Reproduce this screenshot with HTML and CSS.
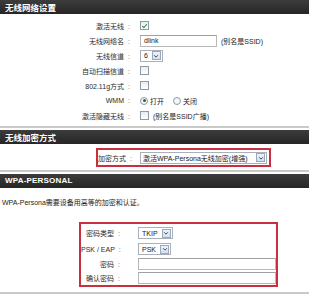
FILE: index.html
```html
<!DOCTYPE html>
<html lang="zh">
<head>
<meta charset="utf-8">
<link rel="stylesheet" href="styles.css">
</head>
<body>
<div class="page">
  <div class="hdr">无线网络设置</div>
  <div class="form f1">
    <span class="lbl">激活无线<i>:</i></span>
    <span class="ctl"><span class="cb on"><svg viewBox="0 0 8 8" width="8" height="8"><path d="M1.5 4.2 L3.3 6 L6.6 2" fill="none" stroke="#2c8a2c" stroke-width="1.3"/></svg></span></span>

    <span class="lbl">无线网络名<i>:</i></span>
    <span class="ctl"><span class="inp ssid">dlink</span><span class="note">(别名是SSID)</span></span>

    <span class="lbl">无线信道<i>:</i></span>
    <span class="ctl"><span class="sel">6<span class="arr"><svg viewBox="0 0 8 8" width="6" height="6"><path d="M1.5 3 L4 5.5 L6.5 3" fill="none" stroke="#3a4a66" stroke-width="1.3"/></svg></span></span></span>

    <span class="lbl">自动扫描信道<i>:</i></span>
    <span class="ctl"><span class="cb"></span></span>

    <span class="lbl">802.11g方式<i>:</i></span>
    <span class="ctl"><span class="cb"></span></span>

    <span class="lbl">WMM<i>:</i></span>
    <span class="ctl"><span class="rd on"></span><span class="rtxt">打开</span><span class="rd"></span><span class="rtxt">关闭</span></span>

    <span class="lbl">激活隐藏无线<i>:</i></span>
    <span class="ctl"><span class="cb"></span><span class="note">(别名是SSID广播)</span></span>
  </div>

  <div class="sep s1"></div>
  <div class="hdr">无线加密方式</div>
  <div class="redbox rb1">
    <span class="lbl">加密方式<i>:</i></span>
    <span class="ctl"><span class="sel wide">激活WPA-Persona无线加密(增强)<span class="arr"><svg viewBox="0 0 8 8" width="6" height="6"><path d="M1.5 3 L4 5.5 L6.5 3" fill="none" stroke="#3a4a66" stroke-width="1.3"/></svg></span></span></span>
  </div>

  <div class="sep s2"></div>
  <div class="hdr latin">WPA-PERSONAL</div>
  <p class="desc">WPA-Persona需要设备用高等的加密和认证。</p>
  <div class="redbox rb2">
    <span class="lbl">密码类型<i>:</i></span>
    <span class="ctl"><span class="sel">TKIP<span class="arr"><svg viewBox="0 0 8 8" width="6" height="6"><path d="M1.5 3 L4 5.5 L6.5 3" fill="none" stroke="#3a4a66" stroke-width="1.3"/></svg></span></span></span>

    <span class="lbl">PSK / EAP<i>:</i></span>
    <span class="ctl"><span class="sel">PSK<span class="arr"><svg viewBox="0 0 8 8" width="6" height="6"><path d="M1.5 3 L4 5.5 L6.5 3" fill="none" stroke="#3a4a66" stroke-width="1.3"/></svg></span></span></span>

    <span class="lbl">密码<i>:</i></span>
    <span class="ctl"><span class="inp pw"></span></span>

    <span class="lbl">确认密码<i>:</i></span>
    <span class="ctl"><span class="inp pw"></span></span>
  </div>
  <div class="sep s3"></div>
</div>
</body>
</html>
```
FILE: styles.css
```css
html, body {
  margin: 0;
  padding: 0;
  background: #ffffff;
}
body {
  font-family: "Liberation Sans", "Noto Sans CJK SC", sans-serif;
  font-size: 7px;
  color: #222222;
  width: 309px;
  height: 296px;
  overflow: hidden;
}
.page {
  display: flex;
  flex-direction: column;
}
.hdr {
  height: 14px;
  line-height: 14px;
  padding-left: 5px;
  background: linear-gradient(#3c3c3c, #262626);
  color: #ffffff;
  font-weight: bold;
  font-size: 8.5px;
  font-family: "Noto Sans CJK SC", sans-serif;
}
.hdr.latin {
  font-family: "Liberation Sans", sans-serif;
  font-size: 8px;
  letter-spacing: 0.2px;
}
.form {
  display: grid;
  grid-template-columns: 130px auto;
  column-gap: 10px;
  grid-auto-rows: 15px;
  align-items: center;
}
.f1 {
  padding-top: 4px;
}
.lbl {
  text-align: right;
  white-space: nowrap;
  color: #2a2a2a;
}
.lbl i {
  font-style: normal;
  margin-left: 4px;
  color: #666;
}
.ctl {
  display: flex;
  align-items: center;
  white-space: nowrap;
}
.cb {
  box-sizing: border-box;
  width: 9px;
  height: 9px;
  border: 1px solid #8e9aa8;
  background: linear-gradient(#e8ecf0, #ffffff);
  display: inline-flex;
  align-items: center;
  justify-content: center;
}
.cb svg { display: block; }
.rd {
  box-sizing: border-box;
  width: 8px;
  height: 8px;
  border: 1px solid #8e9aa8;
  border-radius: 50%;
  background: #f4f6f8;
  position: relative;
}
.rd.on::after {
  content: "";
  position: absolute;
  left: 1.5px;
  top: 1.5px;
  width: 3px;
  height: 3px;
  border-radius: 50%;
  background: #2a6a2a;
}
.rtxt {
  margin-left: 2px;
  margin-right: 9px;
}
.inp {
  box-sizing: border-box;
  height: 12px;
  line-height: 10px;
  border: 1px solid #b9b9b9;
  border-top-color: #a0a0a0;
  padding-left: 3px;
  background: #fff;
  display: inline-block;
}
.ssid { width: 77px; }
.note { margin-left: 4px; }
.sel {
  box-sizing: border-box;
  height: 12px;
  border: 1px solid #a9b0b9;
  padding-left: 3px;
  display: inline-flex;
  align-items: center;
  background: #fff;
}
.arr {
  box-sizing: border-box;
  width: 9px;
  height: 9px;
  margin-left: 4px;
  margin-right: 1px;
  border: 1px solid #9aa8bd;
  background: linear-gradient(#eef2f8, #d6dfec);
  display: inline-flex;
  align-items: center;
  justify-content: center;
}
.arr svg { display: block; }
.sep {
  height: 2px;
  background: #c9c9c9;
}
.s1 { margin: 3px 0 2px; }
.redbox {
  box-sizing: border-box;
  border: 2px solid #c9303f;
  display: grid;
  align-items: center;
}
.rb1 {
  margin: 4px 0 0 96px;
  width: 175px;
  height: 19px;
  grid-template-columns: 30px auto;
  column-gap: 12px;
}
.rb1 .sel { padding-left: 2px; width: 127px; justify-content: space-between; }
.s2 { margin: 3px 0 2px; }
.desc {
  margin: 8px 0 0 2px;
  line-height: 14px;
}
.rb2 {
  margin: 12px 0 0 79px;
  width: 199px;
  height: 65px;
  padding-top: 1px;
  grid-template-columns: 39px auto;
  grid-template-rows: 16px 16px 14px 14px;
  column-gap: 18px;
}
.pw { width: 138px; height: 12px; }
.s3 { margin-top: 5px; }
```
